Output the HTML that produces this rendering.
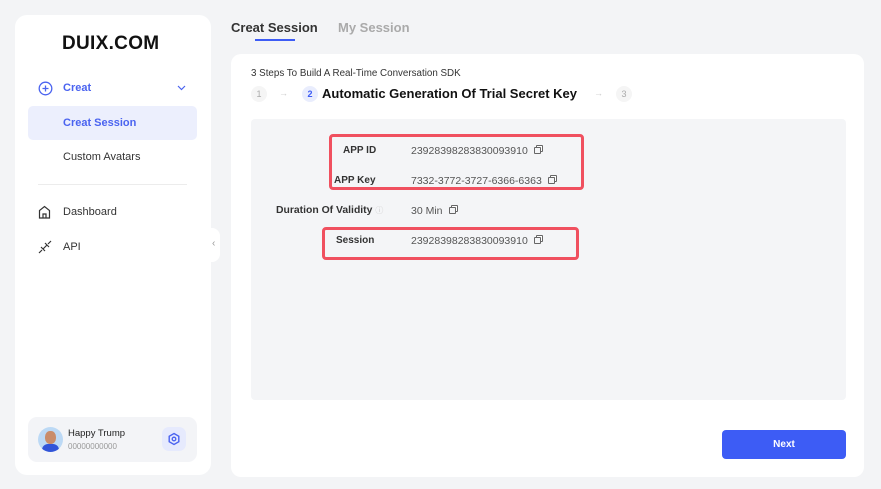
<!DOCTYPE html>
<html><head><meta charset="utf-8"><style>
*{margin:0;padding:0;box-sizing:border-box}
body{width:881px;height:489px;background:#f3f4f6;font-family:"Liberation Sans",sans-serif;position:relative;overflow:hidden;color:#222}
.abs{position:absolute}
.side{left:15px;top:15px;width:196px;height:460px;background:#fff;border-radius:12px}
.main{left:231px;top:54px;width:633px;height:423px;background:#fff;border-radius:10px}
.t{position:absolute;white-space:nowrap}
.box{position:absolute;border:3px solid #f0505f;border-radius:4px}
.copy{display:inline-block;width:7px;height:7px;border:1px solid #666;border-radius:1px;margin-left:6px;position:relative;top:0px;box-shadow:2px -2px 0 -1px #fff,2px -2px 0 0 #666}
</style></head><body>
<div class="abs side"></div>
<div class="t" style="left:62px;top:33px;font-size:19px;font-weight:bold;color:#111;letter-spacing:0.3px">DUIX.COM</div>
<svg class="abs" style="left:38px;top:81px" width="15" height="15" viewBox="0 0 15 15"><circle cx="7.5" cy="7.5" r="6.3" fill="none" stroke="#4a63f0" stroke-width="1.3"/><path d="M7.5 4.5v6M4.5 7.5h6" stroke="#4a63f0" stroke-width="1.3"/></svg>
<div class="t" style="left:63px;top:82px;font-size:11px;font-weight:bold;color:#4a63f0">Creat</div>
<svg class="abs" style="left:177px;top:85px" width="9" height="6"><path d="M1 1l3.5 3.5L8 1" fill="none" stroke="#4a63f0" stroke-width="1.2"/></svg>
<div class="abs" style="left:28px;top:106px;width:169px;height:34px;background:#eceffd;border-radius:5px"></div>
<div class="t" style="left:63px;top:117px;font-size:11px;font-weight:bold;color:#4a63f0">Creat Session</div>
<div class="t" style="left:63px;top:151px;font-size:11px;color:#333">Custom Avatars</div>
<div class="abs" style="left:38px;top:184px;width:149px;height:1px;background:#ececec"></div>
<svg class="abs" style="left:38px;top:205px" width="13" height="14"><path d="M1.5 13V5.5L6.5 1.5l5 4V13zM5 13V9h3v4" fill="none" stroke="#333" stroke-width="1.2"/></svg>
<div class="t" style="left:63px;top:206px;font-size:11px;color:#333">Dashboard</div>
<svg class="abs" style="left:38px;top:240px" width="14" height="14"><path d="M1 13l3-3M13 1l-3 3M3 7l4 4M7 3l4 4M5 9l2-2M9 5L7 7" fill="none" stroke="#333" stroke-width="1.2"/></svg>
<div class="t" style="left:63px;top:241px;font-size:11px;color:#333">API</div>
<div class="abs" style="left:208px;top:228px;width:12px;height:34px;background:#fff;border-radius:0 8px 8px 0"></div>
<div class="t" style="left:212px;top:238px;font-size:10px;color:#999">‹</div>
<div class="abs" style="left:28px;top:417px;width:169px;height:45px;background:#f3f4f7;border-radius:9px"></div>
<div class="abs" style="left:38px;top:427px;width:25px;height:25px;border-radius:50%;background:#bcd9f5;overflow:hidden"><div style="position:absolute;left:7px;top:4px;width:11px;height:13px;background:#c98c6a;border-radius:45%"></div><div style="position:absolute;left:4px;top:17px;width:17px;height:10px;background:#3154d8;border-radius:6px 6px 0 0"></div></div>
<div class="t" style="left:68px;top:428px;font-size:9.5px;color:#222">Happy Trump</div>
<div class="t" style="left:68px;top:442px;font-size:8px;color:#999">00000000000</div>
<div class="abs" style="left:162px;top:427px;width:24px;height:24px;border-radius:7px;background:#e6eafd"></div>
<svg class="abs" style="left:167px;top:432px" width="14" height="14"><path d="M7 1.5l4.8 2.75v5.5L7 12.5 2.2 9.75v-5.5z" fill="none" stroke="#4a63f0" stroke-width="1.4"/><circle cx="7" cy="7" r="1.8" fill="none" stroke="#4a63f0" stroke-width="1.3"/></svg>

<div class="t" style="left:231px;top:20px;font-size:13px;font-weight:bold;color:#333">Creat Session</div>
<div class="abs" style="left:255px;top:39px;width:40px;height:2px;background:#3d5cf5"></div>
<div class="t" style="left:338px;top:20px;font-size:13px;font-weight:bold;color:#aaa">My Session</div>
<div class="abs main"></div>
<div class="t" style="left:251px;top:68px;font-size:9.8px;color:#333">3 Steps To Build A Real-Time Conversation SDK</div>
<div class="abs" style="left:251px;top:86px;width:16px;height:16px;border-radius:50%;background:#f5f5f5;color:#aaa;font-size:9px;text-align:center;line-height:16px">1</div>
<div class="t" style="left:279px;top:88px;font-size:9px;color:#ccc">→</div>
<div class="abs" style="left:302px;top:86px;width:16px;height:16px;border-radius:50%;background:#e9edfd;color:#3d5cf5;font-size:9px;font-weight:bold;text-align:center;line-height:16px">2</div>
<div class="t" style="left:322px;top:86px;font-size:13px;font-weight:bold;color:#111">Automatic Generation Of Trial Secret Key</div>
<div class="t" style="left:594px;top:88px;font-size:9px;color:#ccc">→</div>
<div class="abs" style="left:616px;top:86px;width:16px;height:16px;border-radius:50%;background:#f5f5f5;color:#aaa;font-size:9px;text-align:center;line-height:16px">3</div>
<div class="abs" style="left:251px;top:119px;width:595px;height:281px;background:#f4f5f7;border-radius:4px"></div>
<div class="box" style="left:329px;top:134px;width:255px;height:56px"></div>
<div class="box" style="left:322px;top:227px;width:257px;height:33px"></div>
<div class="t" style="left:343px;top:145px;font-size:10px;font-weight:bold;color:#333">APP ID</div>
<div class="t" style="left:334px;top:175px;font-size:10px;font-weight:bold;color:#333">APP Key</div>
<div class="t" style="left:276px;top:205px;font-size:10.4px;font-weight:bold;color:#333">Duration Of Validity <span style="color:#ccc;font-weight:normal;font-size:8px">ⓘ</span></div>
<div class="t" style="left:336px;top:235px;font-size:10px;font-weight:bold;color:#333">Session</div>
<div class="t" style="left:411px;top:145px;font-size:10.5px;color:#555">23928398283830093910<span class="copy"></span></div>
<div class="t" style="left:411px;top:175px;font-size:10.5px;color:#555">7332-3772-3727-6366-6363<span class="copy"></span></div>
<div class="t" style="left:411px;top:205px;font-size:10.5px;color:#555">30 Min<span class="copy"></span></div>
<div class="t" style="left:411px;top:235px;font-size:10.5px;color:#555">23928398283830093910<span class="copy"></span></div>
<div class="abs" style="left:722px;top:430px;width:124px;height:29px;background:#3d5cf5;border-radius:4px;color:#fff;font-size:10px;font-weight:bold;text-align:center;line-height:29px">Next</div>
</body></html>
